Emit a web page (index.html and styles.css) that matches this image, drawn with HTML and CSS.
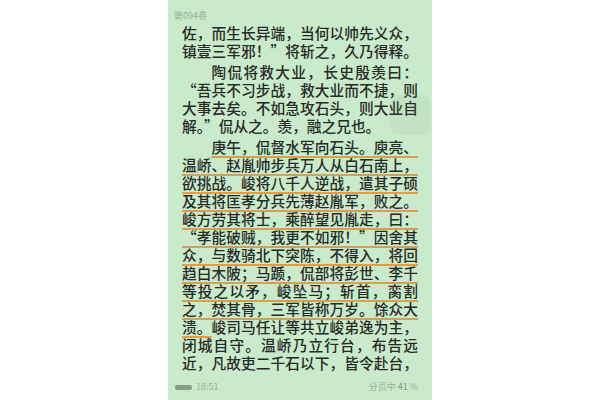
FILE: index.html
```html
<!DOCTYPE html>
<html lang="zh-CN">
<head>
  <meta charset="UTF-8">
  <meta name="viewport" content="width=device-width, initial-scale=1.0">
  <title>第094卷</title>
  <link rel="stylesheet" href="styles.css">
</head>
<body>
  <div class="reader">
    <div class="chapter">第094卷</div>

    <div class="text">
      <div class="para">
        <div class="line">佐，而生长异端，当何以帅先义众，</div>
        <div class="line">镇壹三军邪！”将斩之，久乃得释。</div>
      </div>
      <div class="para">
        <div class="line indent">陶侃将救大业，长史殷羡曰：</div>
        <div class="line">“吾兵不习步战，救大业而不捷，则</div>
        <div class="line">大事去矣。不如急攻石头，则大业自</div>
        <div class="line last">解。”侃从之。羡，融之兄也。</div>
      </div>
      <div class="para">
        <div class="line indent"><span class="mark">庚午，侃督水军向石头。庾亮、</span></div>
        <div class="line"><span class="mark">温峤、赵胤帅步兵万人从白石南上，</span></div>
        <div class="line"><span class="mark">欲挑战。峻将八千人逆战，遣其子硕</span></div>
        <div class="line"><span class="mark">及其将匡孝分兵先薄赵胤军，败之。</span></div>
        <div class="line"><span class="mark">峻方劳其将士，乘醉望见胤走，曰：</span></div>
        <div class="line"><span class="mark">“孝能破贼，我更不如邪！”因舍其</span></div>
        <div class="line"><span class="mark">众，与数骑北下突陈，不得入，将回</span></div>
        <div class="line"><span class="mark">趋白木陂；马踬，侃部将彭世、李千</span></div>
        <div class="line"><span class="mark">等投之以矛，峻坠马；斩首，脔割</span></div>
        <div class="line"><span class="mark">之，焚其骨，三军皆称万岁。馀众大</span></div>
        <div class="line"><span class="mark">溃。</span>峻司马任让等共立峻弟逸为主，</div>
        <div class="line">闭城自守。温峤乃立行台，布告远</div>
        <div class="line">近，凡故吏二千石以下，皆令赴台，</div>
      </div>
    </div>

    <div class="float-btn"></div>

    <div class="status">
      <div class="clock">
        <span class="battery"></span>
        <span>18:51</span>
      </div>
      <div class="progress">分页中 <b>41</b> %</div>
    </div>
  </div>
</body>
</html>
```

FILE: styles.css
```css
body {
    margin: 0;
    background: #fff;
    font-family: "Noto Sans CJK SC", "Noto Sans", sans-serif;
}
.reader {
    position: relative;
    width: 264px;
    height: 400px;
    margin: 0 auto;
    background: #c9eacb;
    display: flex;
    flex-direction: column;
}
.chapter {
    padding: 10px 6px 0;
    font-size: 9px;
    line-height: 12px;
    color: #97ad98;
}
.text {
    margin-top: 2px;
    padding: 0 14px;
    font-size: 14.7px;
    font-weight: 500;
    line-height: 18px;
    color: #272b27;
}
.para + .para {
    margin-top: 3px;
}
.line {
    white-space: nowrap;
    text-align: justify;
    text-align-last: justify;
}
.line.last {
    text-align-last: left;
}
.indent {
    padding-left: 2em;
}
.mark {
    text-decoration: underline;
    text-decoration-color: #dc9e4c;
    text-decoration-thickness: 1.5px;
    text-underline-offset: 3px;
}
.float-btn {
    position: absolute;
    top: 95px;
    right: 2px;
    width: 40px;
    height: 40px;
    border-radius: 8px;
    background: rgba(120, 140, 120, 0.08);
}
.status {
    margin-top: auto;
    margin-bottom: 7px;
    padding: 0 14px 0 7px;
    display: flex;
    justify-content: space-between;
    align-items: center;
    font-size: 9px;
    line-height: 12px;
    color: #9aae9b;
}
.clock {
    display: flex;
    align-items: center;
    gap: 4px;
}
.battery {
    width: 17px;
    height: 5px;
    border-radius: 2px;
    background: #8b9c8c;
}
.progress b {
    font-weight: normal;
    color: #7f957f;
}
```
